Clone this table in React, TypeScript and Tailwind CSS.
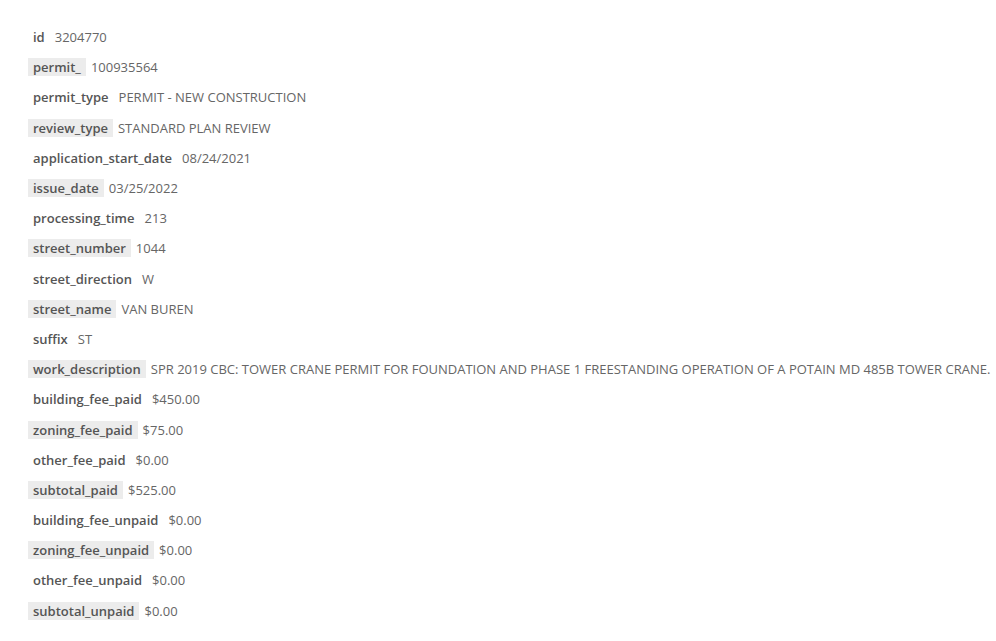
const rows: [string, string][] = [
  ["id", "3204770"],
  ["permit_", "100935564"],
  ["permit_type", "PERMIT - NEW CONSTRUCTION"],
  ["review_type", "STANDARD PLAN REVIEW"],
  ["application_start_date", "08/24/2021"],
  ["issue_date", "03/25/2022"],
  ["processing_time", "213"],
  ["street_number", "1044"],
  ["street_direction", "W"],
  ["street_name", "VAN BUREN"],
  ["suffix", "ST"],
  [
    "work_description",
    "SPR 2019 CBC: TOWER CRANE PERMIT FOR FOUNDATION AND PHASE 1 FREESTANDING OPERATION OF A POTAIN MD 485B TOWER CRANE.",
  ],
  ["building_fee_paid", "$450.00"],
  ["zoning_fee_paid", "$75.00"],
  ["other_fee_paid", "$0.00"],
  ["subtotal_paid", "$525.00"],
  ["building_fee_unpaid", "$0.00"],
  ["zoning_fee_unpaid", "$0.00"],
  ["other_fee_unpaid", "$0.00"],
  ["subtotal_unpaid", "$0.00"],
];

export default function App() {
  return (
    <div
      className="min-h-screen bg-white pt-[22px] pl-[28px] text-[13px]"
      style={{ fontFamily: '"Open Sans", sans-serif' }}
    >
      {rows.map(([label, value], i) => (
        <div key={label} className="flex items-center h-[30.2px] whitespace-nowrap">
          <span
            className={`px-[5px] h-[18px] leading-[18px] font-semibold text-[#555] ${
              i % 2 === 1 ? "bg-[#ececec]" : ""
            }`}
          >
            {label}
          </span>
          <span className="ml-[5px] leading-[18px] text-[#666]">{value}</span>
        </div>
      ))}
    </div>
  );
}
